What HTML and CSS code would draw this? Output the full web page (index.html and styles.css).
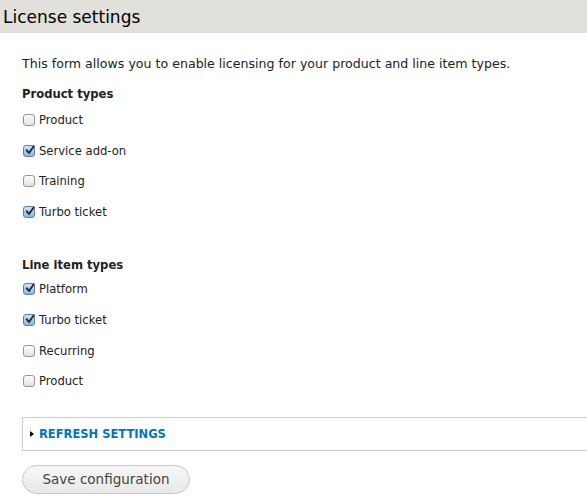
FILE: index.html
```html
<!DOCTYPE html>
<html>
<head>
<meta charset="utf-8">
<link rel="stylesheet" href="styles.css">
</head>
<body>
<div class="header"><h1 class="title">License settings</h1></div>
<div class="content">
  <p class="intro">This form allows you to enable licensing for your product and line item types.</p>
  <div class="group">
    <div class="group-label">Product types</div>
    <label class="item"><span class="cb"></span>Product</label>
    <label class="item"><span class="cb checked"><svg viewBox="0 0 12 12" width="12" height="12"><path d="M2.6 6.2 L5 9 L9.8 2.2" fill="none" stroke="#1b2a3a" stroke-width="1.9" stroke-linecap="round" stroke-linejoin="round"/></svg></span>Service add-on</label>
    <label class="item"><span class="cb"></span>Training</label>
    <label class="item"><span class="cb checked"><svg viewBox="0 0 12 12" width="12" height="12"><path d="M2.6 6.2 L5 9 L9.8 2.2" fill="none" stroke="#1b2a3a" stroke-width="1.9" stroke-linecap="round" stroke-linejoin="round"/></svg></span>Turbo ticket</label>
  </div>
  <div class="group group2">
    <div class="group-label">Line item types</div>
    <label class="item"><span class="cb checked"><svg viewBox="0 0 12 12" width="12" height="12"><path d="M2.6 6.2 L5 9 L9.8 2.2" fill="none" stroke="#1b2a3a" stroke-width="1.9" stroke-linecap="round" stroke-linejoin="round"/></svg></span>Platform</label>
    <label class="item"><span class="cb checked"><svg viewBox="0 0 12 12" width="12" height="12"><path d="M2.6 6.2 L5 9 L9.8 2.2" fill="none" stroke="#1b2a3a" stroke-width="1.9" stroke-linecap="round" stroke-linejoin="round"/></svg></span>Turbo ticket</label>
    <label class="item"><span class="cb"></span>Recurring</label>
    <label class="item"><span class="cb"></span>Product</label>
  </div>
  <div class="fieldset">
    <span class="arrow"></span><a class="legend" href="#">REFRESH SETTINGS</a>
  </div>
  <button class="btn">Save configuration</button>
</div>
</body>
</html>
```
FILE: styles.css
```css
html, body {
  margin: 0;
  padding: 0;
  background: #fff;
}
body {
  font-family: "DejaVu Sans", "Liberation Sans", sans-serif;
  font-size: 12px;
  color: #222;
  overflow: hidden;
}
.header {
  background: #e1e0da;
  height: 33px;
  display: flex;
  align-items: center;
  padding-left: 3px;
}
.title {
  margin: 0;
  font-size: 17px;
  font-weight: normal;
  color: #000;
}
.content {
  padding: 0 0 0 22px;
}
.intro {
  margin: 23px 0 0 0;
  line-height: 16px;
  font-size: 12.6px;
  color: #222;
}
.group {
  display: flex;
  flex-direction: column;
}
.group-label {
  font-weight: bold;
  font-size: 11.6px;
  margin-top: 14px;
  line-height: 16px;
  margin-bottom: 3px;
  color: #222;
}
.group2 .group-label {
  margin-top: 29px;
  margin-bottom: 1.5px;
}
.item {
  display: flex;
  align-items: center;
  height: 16px;
  font-size: 11.6px;
  margin: 7px 0 7.7px 0;
  color: #222;
}
.cb {
  width: 12px;
  height: 12px;
  box-sizing: border-box;
  border: 1px solid #959595;
  border-radius: 3px;
  background: linear-gradient(#fdfdfd, #e2e2e2);
  margin: 0 4px 0 1px;
  display: inline-flex;
  position: relative;
}
.cb.checked {
  background: linear-gradient(#d2e4f6, #8db5e0);
  border-color: #5d7fa5;
}
.cb svg {
  position: absolute;
  left: 0;
  top: -2px;
}
.fieldset {
  margin-top: 19.5px;
  border: 1px solid #ccc;
  border-right: none;
  height: 34px;
  display: flex;
  align-items: center;
  padding-left: 7px;
  box-sizing: border-box;
}
.arrow {
  width: 0;
  height: 0;
  border-top: 3.5px solid transparent;
  border-bottom: 3.5px solid transparent;
  border-left: 4px solid #000;
  margin-right: 5px;
}
.legend {
  color: #0074bd;
  font-weight: bold;
  text-decoration: none;
  font-size: 11.5px;
}
.btn {
  margin-top: 14px;
  width: 168px;
  height: 29px;
  border: 1px solid #c8c8c8;
  border-radius: 15px;
  background: linear-gradient(#f7f7f7, #e8e8e8);
  font-family: "DejaVu Sans", sans-serif;
  font-size: 13.5px;
  color: #444;
  padding: 0;
}
```
